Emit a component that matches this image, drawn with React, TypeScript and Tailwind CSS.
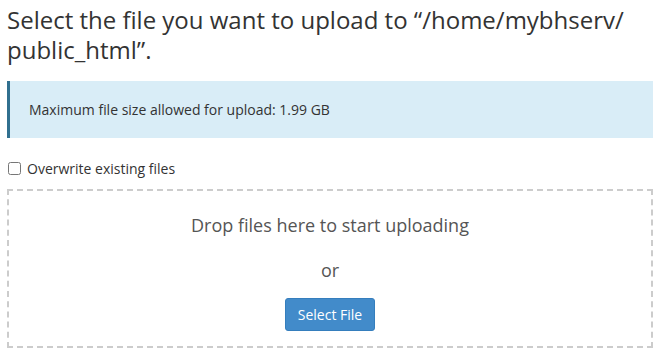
import React from "react";

export default function App() {
  return (
    <div
      className="w-[658px] h-[355px] bg-white overflow-hidden pl-[7px] pr-[5px]"
      style={{ fontFamily: '"Open Sans", sans-serif' }}
    >
      <h1 className="pt-[5px] pr-[10px] text-[24px] leading-[30px] font-normal text-[#333]">
        Select the file you want to upload to “/home/<wbr />mybhserv/<wbr />public_html”.
      </h1>
      <div className="mt-[16px] h-[57px] flex items-center bg-[#d9edf7] border-l-[3px] border-[#31708f] pl-[19px] text-[14px] text-[#333]">
        Maximum file size allowed for upload: 1.99 GB
      </div>
      <label className="mt-[22px] flex items-center gap-[6px] text-[14px] text-[#333] h-[16px]">
        <input type="checkbox" className="ml-[1px] w-[13px] h-[13px] m-0" />
        Overwrite existing files
      </label>
      <div className="mt-[13px] h-[159px] border-2 border-dashed border-[#ccc] flex flex-col items-center">
        <div className="mt-[21px] text-[18px] leading-[26px] text-[#555]">
          Drop files here to start uploading
        </div>
        <div className="mt-[19px] text-[18px] leading-[26px] text-[#555]">or</div>
        <button className="mt-[15px] w-[90px] h-[33px] bg-[#428bca] border border-[#357ebd] rounded-[3px] text-white text-[14px]">
          Select File
        </button>
      </div>
    </div>
  );
}
